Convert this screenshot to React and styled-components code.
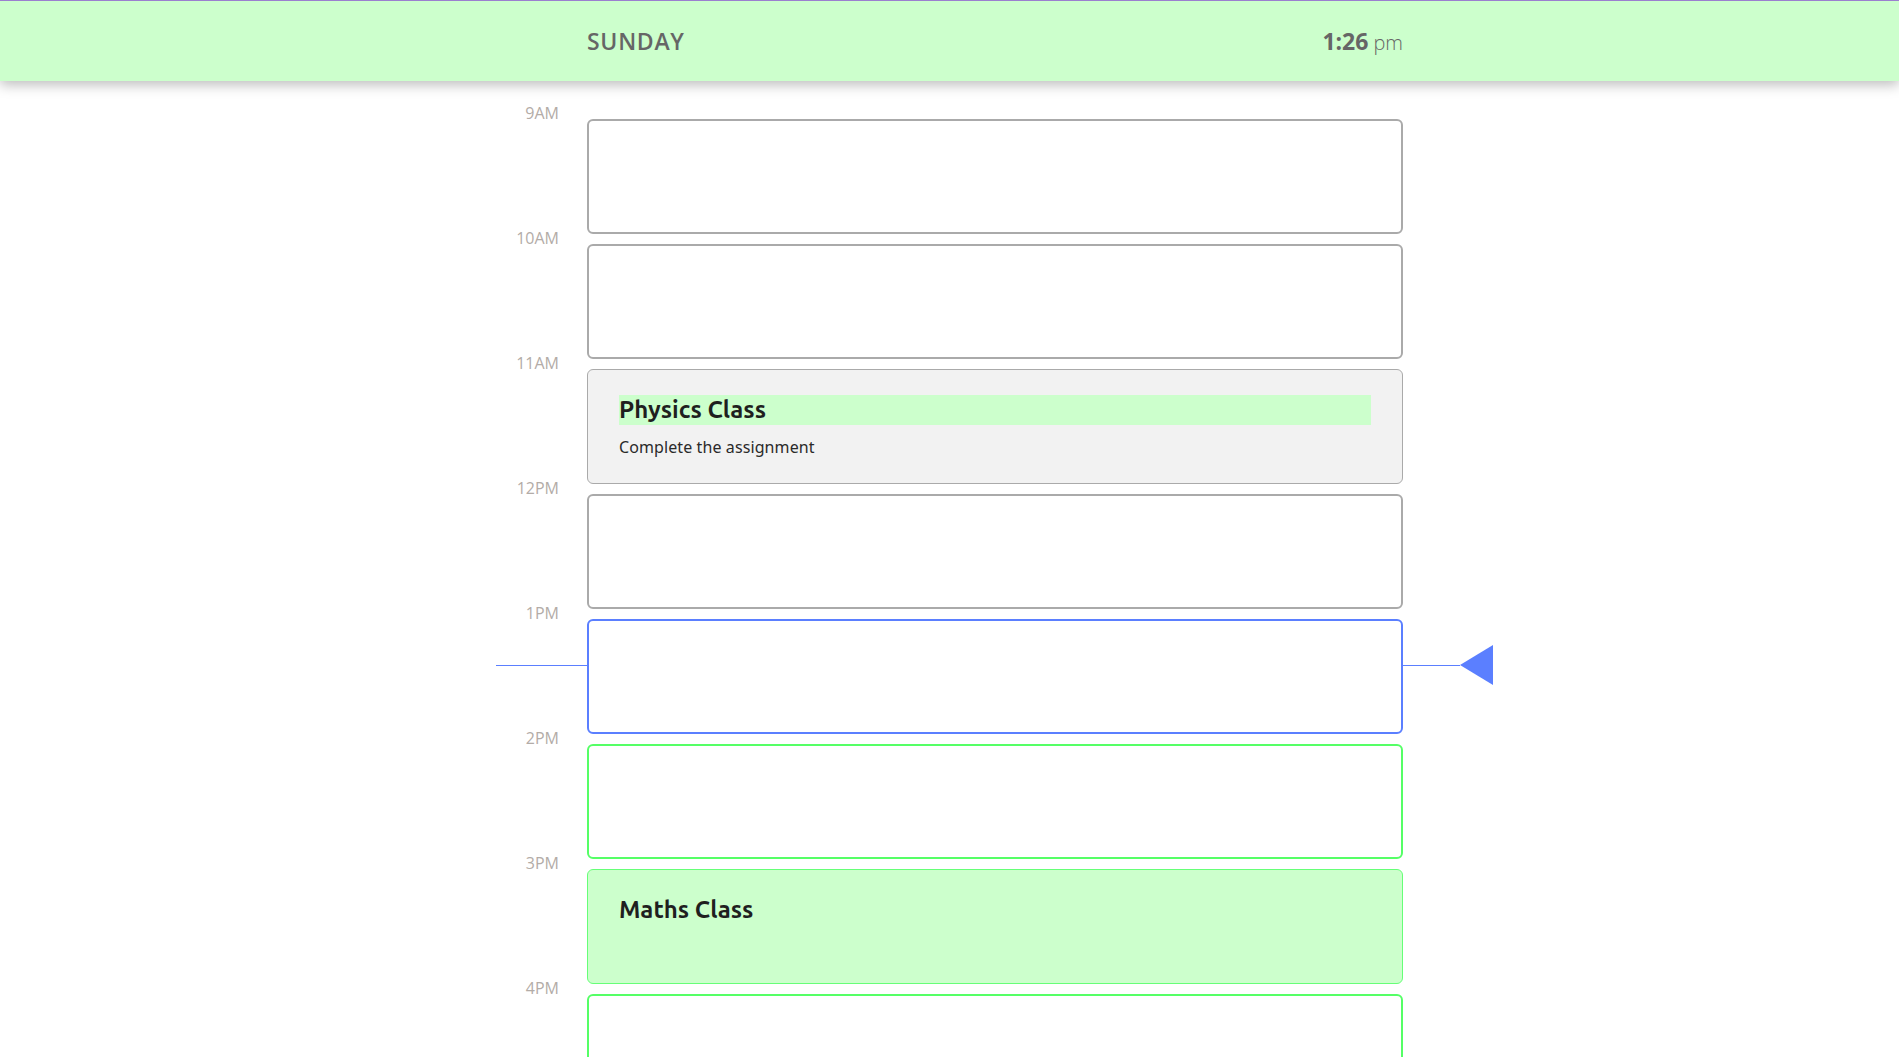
import React from "react";
import styled, { createGlobalStyle } from "styled-components";

const GlobalStyle = createGlobalStyle`
  html, body { margin: 0; padding: 0; background: #ffffff; }
  body { font-family: "Open Sans", "Noto Sans", sans-serif; overflow: hidden; }
`;

const ROW_PITCH = 125;
const START_HOUR = 9;

const Header = styled.header`
  height: 80px;
  border-top: 1px solid #9b7fcf;
  background: #ccffcc;
  box-shadow: 0 4px 12px rgba(0, 0, 0, 0.26);
  position: relative;
  z-index: 2;
`;

const HeaderInner = styled.div`
  width: 816px;
  height: 100%;
  margin-left: 587px;
  display: flex;
  align-items: center;
  justify-content: space-between;
  color: #666666;
`;

const DayName = styled.h1`
  margin: 0;
  font-size: 23px;
  font-weight: 600;
  letter-spacing: 0.7px;
`;

const Clock = styled.div`
  display: flex;
  align-items: baseline;
  gap: 5px;
`;

const ClockTime = styled.span`
  font-size: 23px;
  font-weight: 700;
`;

const ClockPeriod = styled.span`
  font-size: 20px;
  font-weight: 300;
`;

const Timeline = styled.main`
  position: relative;
  margin: 38px 0 0 459px;
  display: grid;
  grid-template-columns: 100px 816px;
  column-gap: 28px;
  row-gap: 10px;
`;

const HourLabel = styled.div`
  margin-top: -17px;
  text-align: right;
  font-size: 16px;
  line-height: 22px;
  color: #b3aca7;
`;

const borders = {
  past: "2px solid #aaaaaa",
  pastEvent: "1.5px solid #aaaaaa",
  now: "2px solid #5b7fff",
  future: "2px solid #55ff66",
  futureEvent: "1px solid #66ff77",
};

const backgrounds = {
  past: "#ffffff",
  pastEvent: "#f2f2f2",
  now: "#ffffff",
  future: "#ffffff",
  futureEvent: "#ccffcc",
};

const Slot = styled.section`
  position: relative;
  z-index: 1;
  box-sizing: border-box;
  height: 115px;
  border: ${(p) => borders[p.$kind]};
  border-radius: 6px;
  background: ${(p) => backgrounds[p.$kind]};
  padding: 25px 31px 0;
`;

const EventTitle = styled.h3`
  margin: 0;
  font-family: "Ubuntu", "Open Sans", sans-serif;
  font-size: 24px;
  font-weight: 600;
  letter-spacing: 0px;
  line-height: 30px;
  color: #1f1f1f;
  background: ${(p) => (p.$highlight ? "#ccffcc" : "transparent")};
`;

const EventNote = styled.p`
  margin: 11px 0 0;
  font-family: "Noto Sans", "Open Sans", sans-serif;
  font-size: 16px;
  letter-spacing: 0.1px;
  line-height: 22px;
  color: #2a2a2a;
`;

const NowMarker = styled.div`
  position: absolute;
  left: 37px;
  height: 40px;
  display: flex;
  align-items: center;
  z-index: 0;
  pointer-events: none;
`;

const NowLine = styled.div`
  width: 964px;
  height: 1px;
  background: #5b7fff;
`;

const slots = [
  { label: "9AM", kind: "past" },
  { label: "10AM", kind: "past" },
  { label: "11AM", kind: "pastEvent", title: "Physics Class", note: "Complete the assignment", highlight: true },
  { label: "12PM", kind: "past" },
  { label: "1PM", kind: "now" },
  { label: "2PM", kind: "future" },
  { label: "3PM", kind: "futureEvent", title: "Maths Class" },
  { label: "4PM", kind: "future" },
];

export default function App() {
  const hour = 13;
  const minute = 26;
  const nowTop = (hour - START_HOUR) * ROW_PITCH - 8 + (minute / 60) * ROW_PITCH - 20;

  return (
    <>
      <GlobalStyle />
      <Header>
        <HeaderInner>
          <DayName>SUNDAY</DayName>
          <Clock>
            <ClockTime>1:26</ClockTime>
            <ClockPeriod>pm</ClockPeriod>
          </Clock>
        </HeaderInner>
      </Header>
      <Timeline>
        {slots.map((s) => (
          <React.Fragment key={s.label}>
            <HourLabel>{s.label}</HourLabel>
            <Slot $kind={s.kind}>
              {s.title && <EventTitle $highlight={s.highlight}>{s.title}</EventTitle>}
              {s.note && <EventNote>{s.note}</EventNote>}
            </Slot>
          </React.Fragment>
        ))}
        <NowMarker style={{ top: `${nowTop}px` }}>
          <NowLine />
          <svg width="33" height="40" viewBox="0 0 33 40">
            <polygon points="0,20 33,0 33,40" fill="#5b7fff" />
          </svg>
        </NowMarker>
      </Timeline>
    </>
  );
}
